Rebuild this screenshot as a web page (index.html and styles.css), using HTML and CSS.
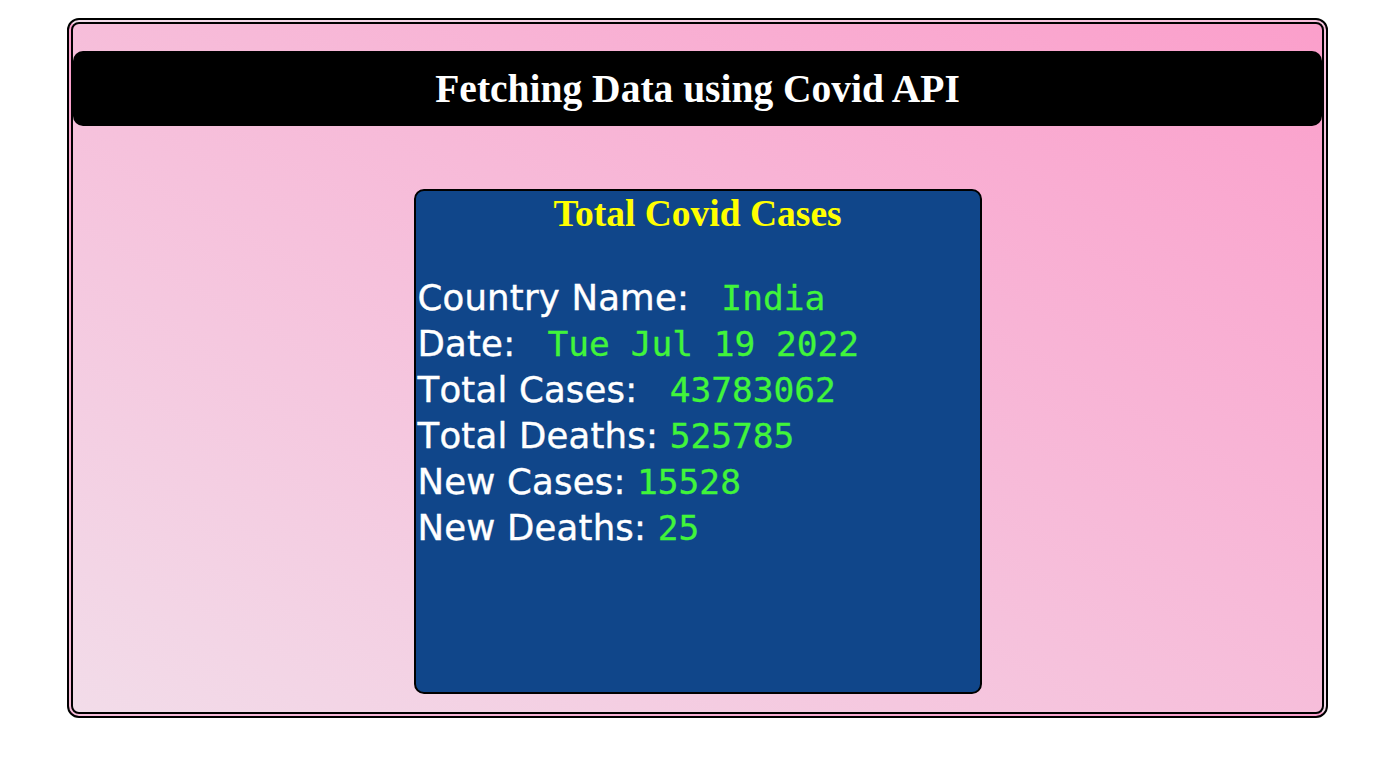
FILE: index.html
```html
<!DOCTYPE html>
<html>
<head>
<meta charset="utf-8">
<link rel="stylesheet" href="styles.css">
</head>
<body>
<div class="frame">
  <div class="header">Fetching Data using Covid API</div>
  <div class="card">
    <div class="card-title">Total Covid Cases</div>
    <div class="rows">
      <div class="row"><span class="label">Country Name: </span><span class="value">&nbsp;India</span></div>
      <div class="row"><span class="label">Date: </span><span class="value">&nbsp;Tue Jul 19 2022</span></div>
      <div class="row"><span class="label">Total Cases: </span><span class="value">&nbsp;43783062</span></div>
      <div class="row"><span class="label">Total Deaths: </span><span class="value">525785</span></div>
      <div class="row"><span class="label">New Cases: </span><span class="value">15528</span></div>
      <div class="row"><span class="label">New Deaths: </span><span class="value">25</span></div>
    </div>
  </div>
</div>
</body>
</html>
```
FILE: styles.css
```css
html, body {
  background: #ffffff;
}
body {
  margin: 8px;
}
.frame {
  margin: 10px 46px 0 59px;
  height: 661px;
  border: 6px double #000000;
  border-radius: 12px;
  background: linear-gradient(to top right, #f2dce9, #fb9fcb);
  padding-top: 27px;
  display: flex;
  flex-direction: column;
  align-items: center;
}
.header {
  align-self: stretch;
  height: 75px;
  background: #000000;
  border-radius: 10px;
  color: #ffffff;
  font-family: "Liberation Serif", "Times New Roman", serif;
  font-weight: bold;
  font-size: 39.5px;
  display: flex;
  align-items: center;
  justify-content: center;
}
.card {
  margin-top: 63px;
  width: 564px;
  height: 501px;
  background: #10468a;
  border: 2px solid #000000;
  border-radius: 10px;
}
.card-title {
  text-align: center;
  color: #ffff00;
  font-family: "Liberation Serif", "Times New Roman", serif;
  font-weight: bold;
  font-size: 37.5px;
  line-height: 44px;
  padding-top: 1px;
}
.rows {
  margin-top: 39px;
  padding-left: 2px;
}
.row {
  height: 46px;
  line-height: 46px;
  white-space: nowrap;
}
.label {
  color: #ffffff;
  font-family: "DejaVu Sans", Verdana, sans-serif;
  font-size: 35.5px;
  font-kerning: none;
  letter-spacing: 0.2px;
  -webkit-text-stroke: 0.4px #ffffff;
}
.value {
  color: #41f53a;
  font-family: "DejaVu Sans Mono", monospace;
  font-size: 34.5px;
  -webkit-text-stroke: 0.3px #41f53a;
}
```
